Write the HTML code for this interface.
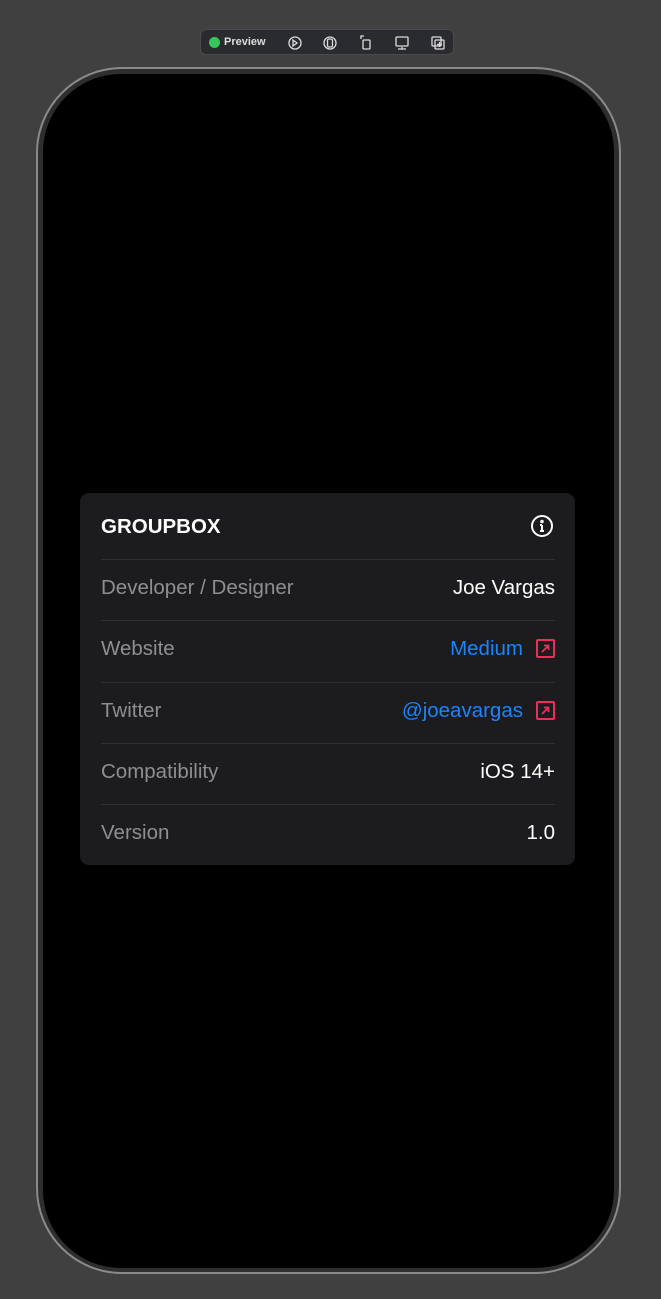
<!DOCTYPE html>
<html><head><style>
body{margin:0;width:661px;height:1299px;background:#404040;position:relative;overflow:hidden;font-family:"Liberation Sans",sans-serif}
.tb{position:absolute;left:200px;top:29px;width:254px;height:26px;background:#2a2b2e;border:1px solid #4a4a4c;border-radius:6px;box-sizing:border-box}
.frame{position:absolute;left:36px;top:67px;width:585px;height:1207px;border:2px solid #8a8a8a;border-radius:86px;box-sizing:border-box;background:#2e2e2e}
.screen{position:absolute;left:43px;top:74px;width:571px;height:1194px;background:#000;border-radius:78px}
.card{position:absolute;left:80px;top:493px;width:495px;height:372px;background:#1c1c1e;border-radius:9px}
.row{position:absolute;left:21px;width:454px;height:61px;border-top:1px solid #2e2e30;font-size:20.5px;line-height:56px;color:#8e8e93}
.row .v{position:absolute;right:0;top:0;color:#fff}
.blue{color:#1a84ff!important}
.ext{display:inline-block;width:19px;height:19px;border:2px solid #e8315a;border-radius:2px;vertical-align:-3px;margin-left:13px;position:relative;box-sizing:border-box}
</style></head><body>
<div class="tb">
<div style="position:absolute;left:8px;top:7px;width:11px;height:11px;border-radius:50%;background:#34c759"></div>
<div style="position:absolute;left:23px;top:6px;font-size:11px;font-weight:bold;color:#ddd">Preview</div>
<svg style="position:absolute;left:80px;top:0" width="170" height="26" fill="none" stroke="#ddd" stroke-width="1.3">
<circle cx="14" cy="13" r="6"/><path d="M12 10l4 3-4 3z"/>
<circle cx="49" cy="13" r="6"/><rect x="46.5" y="9" width="5" height="8" rx="1.5"/>
<rect x="82" y="10" width="7" height="9" rx="1"/><path d="M80 9v-3h3"/>
<rect x="115" y="7" width="12" height="9" rx="1"/><path d="M121 17v2M117 19h8"/>
<rect x="151" y="7" width="9" height="9" rx="1"/><rect x="154" y="10" width="9" height="9" rx="1"/><path d="M158.5 12v5M156 14.5h5"/>
</svg>
</div>
<div class="frame"></div>
<div class="screen"></div>
<div class="card">
<div style="position:absolute;left:21px;top:22px;font-size:20.5px;font-weight:bold;color:#fff">GROUPBOX</div>
<svg style="position:absolute;left:450px;top:21px" width="24" height="24" fill="none" stroke="#fff" stroke-width="2"><circle cx="12" cy="12" r="10"/><path d="M12 11v6M10 17h4M10 11h2"/><circle cx="12" cy="7.5" r=".8" fill="#fff"/></svg>
<div class="row" style="top:66px">Developer / Designer<span class="v">Joe Vargas</span></div>
<div class="row" style="top:127px">Website<span class="v"><span class="blue">Medium</span><span class="ext"><svg style="position:absolute;left:2px;top:2px" width="11" height="11" stroke="#e8315a" stroke-width="1.8" fill="none"><path d="M2 9L8.5 2.5M4 2.5h4.5V7"/></svg></span></span></div>
<div class="row" style="top:189px">Twitter<span class="v"><span class="blue">@joeavargas</span><span class="ext"><svg style="position:absolute;left:2px;top:2px" width="11" height="11" stroke="#e8315a" stroke-width="1.8" fill="none"><path d="M2 9L8.5 2.5M4 2.5h4.5V7"/></svg></span></span></div>
<div class="row" style="top:250px">Compatibility<span class="v">iOS 14+</span></div>
<div class="row" style="top:311px">Version<span class="v">1.0</span></div>
</div>
</body></html>
